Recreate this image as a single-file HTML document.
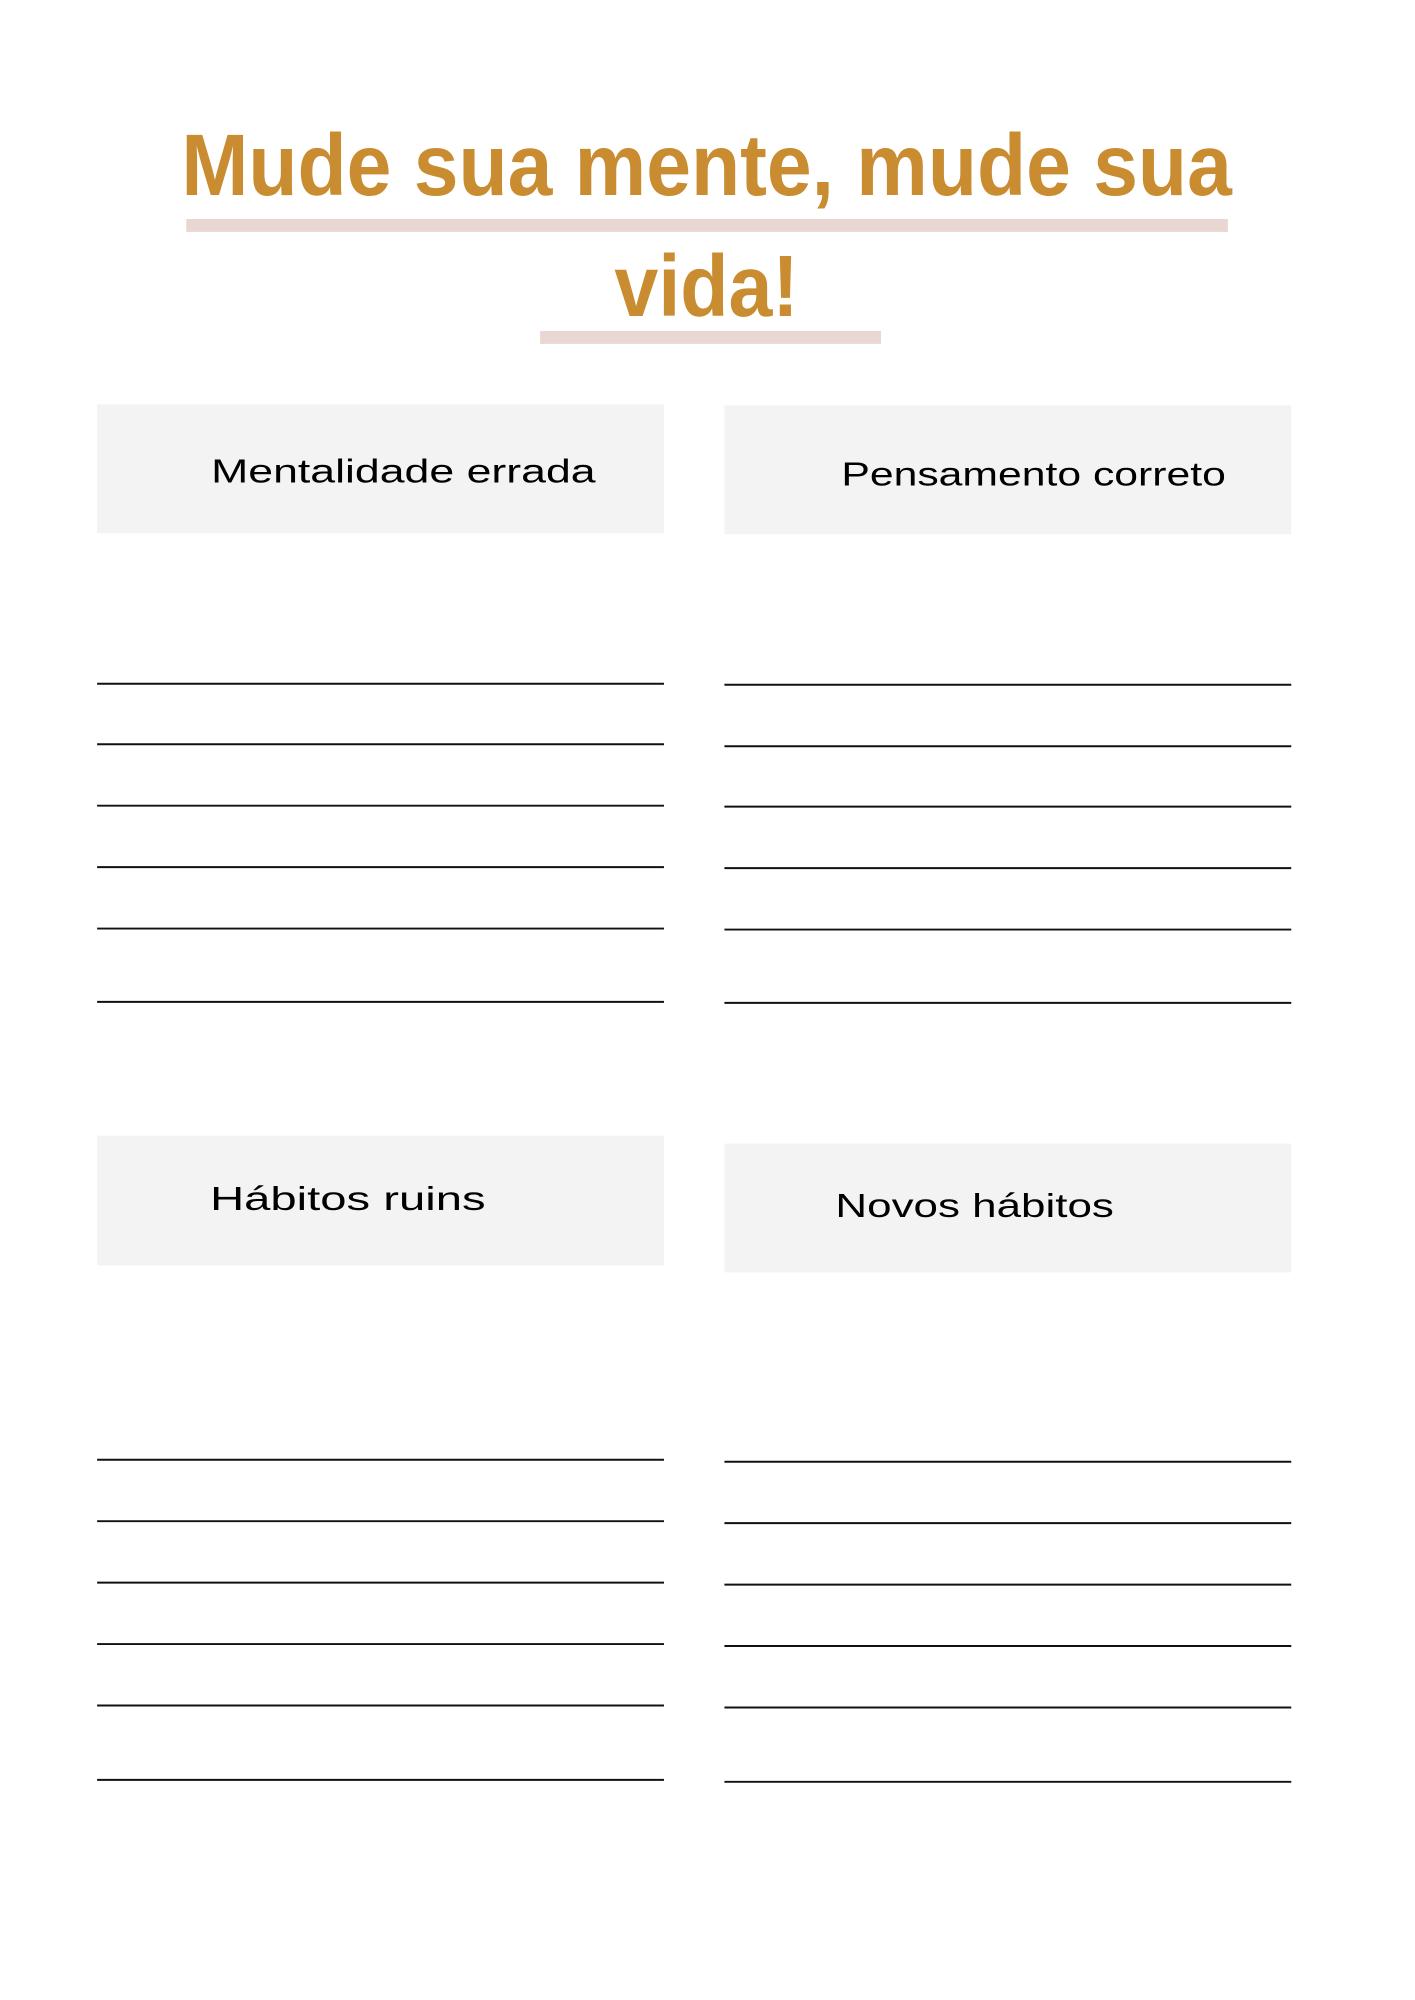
<!DOCTYPE html>
<html><head><meta charset="utf-8"><style>
html,body{margin:0;padding:0;background:#fff;}
svg{display:block;}
</style></head><body>
<svg width="1415" height="2000" viewBox="0 0 1415 2000" xmlns="http://www.w3.org/2000/svg">
<rect width="1415" height="2000" fill="#fff"/>
<g transform="scale(0.991)">
<g font-family="Liberation Sans, sans-serif" font-weight="bold" fill="#c98c30" font-size="88">
<text x="183" y="197" textLength="1060" lengthAdjust="spacingAndGlyphs">Mude sua mente, mude sua</text>
<text x="620" y="319" textLength="186" lengthAdjust="spacingAndGlyphs">vida!</text>
</g>
<rect x="188" y="221" width="1051" height="13" fill="#ead6d2"/>
<rect x="545" y="334" width="344" height="13" fill="#ead6d2"/>
<g fill="#f3f3f3">
<rect x="98" y="408" width="572" height="130"/>
<rect x="731" y="409" width="572" height="130"/>
<rect x="98" y="1146" width="572" height="131"/>
<rect x="731" y="1154" width="572" height="130"/>
</g>
<g font-family="Liberation Sans, sans-serif" fill="#000" font-size="34">
<text x="213" y="487" textLength="388" lengthAdjust="spacingAndGlyphs">Mentalidade errada</text>
<text x="849" y="490" textLength="388" lengthAdjust="spacingAndGlyphs">Pensamento correto</text>
<text x="212" y="1221" textLength="278" lengthAdjust="spacingAndGlyphs">Hábitos ruins</text>
<text x="843" y="1228" textLength="281" lengthAdjust="spacingAndGlyphs">Novos hábitos</text>
</g>
<g stroke="#111" stroke-width="2">
<line x1="98" x2="670" y1="690" y2="690"/>
<line x1="98" x2="670" y1="751" y2="751"/>
<line x1="98" x2="670" y1="813" y2="813"/>
<line x1="98" x2="670" y1="875" y2="875"/>
<line x1="98" x2="670" y1="937" y2="937"/>
<line x1="98" x2="670" y1="1011" y2="1011"/>
<line x1="731" x2="1303" y1="691" y2="691"/>
<line x1="731" x2="1303" y1="753" y2="753"/>
<line x1="731" x2="1303" y1="814" y2="814"/>
<line x1="731" x2="1303" y1="876" y2="876"/>
<line x1="731" x2="1303" y1="938" y2="938"/>
<line x1="731" x2="1303" y1="1012" y2="1012"/>
<line x1="98" x2="670" y1="1473" y2="1473"/>
<line x1="98" x2="670" y1="1535" y2="1535"/>
<line x1="98" x2="670" y1="1597" y2="1597"/>
<line x1="98" x2="670" y1="1659" y2="1659"/>
<line x1="98" x2="670" y1="1721" y2="1721"/>
<line x1="98" x2="670" y1="1796" y2="1796"/>
<line x1="731" x2="1303" y1="1475" y2="1475"/>
<line x1="731" x2="1303" y1="1537" y2="1537"/>
<line x1="731" x2="1303" y1="1599" y2="1599"/>
<line x1="731" x2="1303" y1="1661" y2="1661"/>
<line x1="731" x2="1303" y1="1723" y2="1723"/>
<line x1="731" x2="1303" y1="1798" y2="1798"/>
</g>
</g>
</svg>
</body></html>
